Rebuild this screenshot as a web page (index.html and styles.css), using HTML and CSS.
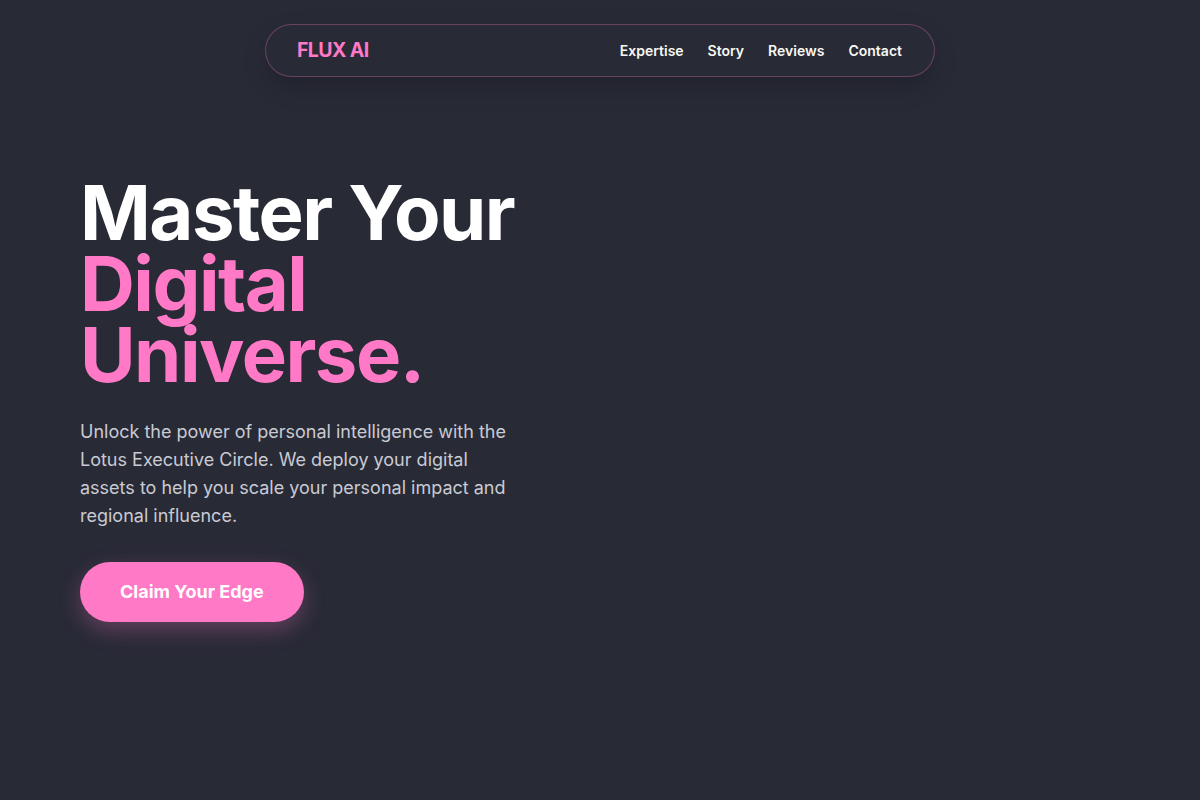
FILE: index.html
```html
<!DOCTYPE html>
<html lang="en">
<head>
<meta charset="utf-8">
<title>FLUX AI</title>
<link rel="stylesheet" href="styles.css">
</head>
<body>
<header class="nav-wrap">
  <nav class="nav">
    <a class="logo" href="#">FLUX AI</a>
    <ul class="links">
      <li><a href="#">Expertise</a></li>
      <li><a href="#">Story</a></li>
      <li><a href="#">Reviews</a></li>
      <li><a href="#">Contact</a></li>
    </ul>
  </nav>
</header>
<main class="hero">
  <h1 class="title">Master Your <span class="accent">Digital Universe.</span></h1>
  <p class="lead">Unlock the power of personal intelligence with the Lotus Executive Circle. We deploy your digital assets to help you scale your personal impact and regional influence.</p>
  <a class="cta" href="#">Claim Your Edge</a>
</main>
</body>
</html>
```
FILE: styles.css
```css
* { box-sizing: border-box; }

html, body {
  margin: 0;
  height: 100%;
}

body {
  background: #282a36;
  color: #f8f8f2;
  font-family: Inter, "Noto Sans", sans-serif;
}

a { text-decoration: none; color: inherit; }

.nav-wrap {
  display: flex;
  justify-content: center;
  padding-top: 24px;
}

.nav {
  width: 670px;
  height: 53px;
  display: flex;
  align-items: center;
  justify-content: space-between;
  padding: 0 32px;
  border: 1px solid rgba(255, 121, 198, 0.3);
  border-radius: 999px;
  background: #282a36;
  box-shadow: 0 10px 24px rgba(0, 0, 0, 0.18);
}

.logo {
  color: #ff79c6;
  font-weight: 700;
  font-size: 19.5px;
  line-height: 22px;
  letter-spacing: -0.03em;
  margin: 0 0 2px -1px;
}

.links {
  list-style: none;
  margin: 0 0 2px;
  padding: 0;
  display: flex;
  gap: 24px;
}

.links a {
  color: #f8f8f2;
  font-size: 14px;
  font-weight: 600;
}

.hero {
  padding: 100px 80px 0;
}

.title {
  margin: 0;
  font-size: 76px;
  line-height: 71px;
  font-weight: 700;
  letter-spacing: -0.02em;
  color: #ffffff;
  max-width: 480px;
}

.accent {
  color: #ff79c6;
}

.lead {
  margin: 28px 0 0;
  max-width: 440px;
  font-size: 18px;
  line-height: 28px;
  color: #c9cad3;
}

.cta {
  display: inline-block;
  margin-top: 32px;
  padding: 20px 40px;
  border-radius: 999px;
  background: #ff79c6;
  color: #ffffff;
  font-size: 18px;
  line-height: 20px;
  font-weight: 700;
  box-shadow: 0 8px 22px rgba(255, 121, 198, 0.28);
}
```
